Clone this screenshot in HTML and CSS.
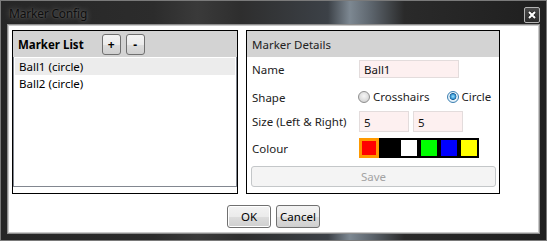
FILE: index.html
```html
<!DOCTYPE html>
<html lang="en">
<head>
  <meta charset="UTF-8" />
  <title>Marker Config</title>
  <link rel="stylesheet" href="styles.css">
</head>
<body>
  <div class="window">
    <div class="titlebar">
      <span class="title">Marker Config</span>
      <button class="close-btn" title="Close">
        <svg width="10" height="10" viewBox="0 0 10 10"><path d="M2 2 L8 8 M8 2 L2 8" stroke="#222" stroke-width="3.4"/><path d="M2 2 L8 8 M8 2 L2 8" stroke="#fff" stroke-width="2"/></svg>
      </button>
    </div>

    <div class="client">
      <div class="panels">
        <section class="panel list-panel">
          <div class="panel-head">
            <span class="head-title bold">Marker List</span>
            <button class="small-btn plus">+</button>
            <button class="small-btn">-</button>
          </div>
          <ul class="marker-list">
            <li class="selected">Ball1 (circle)</li>
            <li>Ball2 (circle)</li>
          </ul>
        </section>

        <section class="panel details-panel">
          <div class="panel-head">
            <span class="head-title">Marker Details</span>
          </div>
          <div class="details-grid">
            <label class="field-label">Name</label>
            <div class="field"><input class="text-input name-input" type="text" value="Ball1"></div>

            <label class="field-label">Shape</label>
            <div class="field radios">
              <span class="radio"><span class="radio-dot"></span>Crosshairs</span>
              <span class="radio checked"><span class="radio-dot"></span>Circle</span>
            </div>

            <label class="field-label">Size (Left &amp; Right)</label>
            <div class="field size-inputs">
              <input class="text-input size-input" type="text" value="5">
              <input class="text-input size-input" type="text" value="5">
            </div>

            <label class="field-label">Colour</label>
            <div class="field swatches">
              <span class="swatch active" style="background: #ff0000;"></span>
              <span class="swatch" style="background: #000000;"></span>
              <span class="swatch" style="background: #ffffff;"></span>
              <span class="swatch" style="background: #00ff00;"></span>
              <span class="swatch" style="background: #0000ff;"></span>
              <span class="swatch" style="background: #ffff00;"></span>
            </div>

            <button class="save-btn" disabled>Save</button>
          </div>
        </section>
      </div>

      <div class="actions">
        <button class="dlg-btn ok-btn">OK</button>
        <button class="dlg-btn">Cancel</button>
      </div>
    </div>
  </div>
</body>
</html>
```

FILE: styles.css
```css
* {
  margin: 0;
  padding: 0;
  box-sizing: border-box;
}
html, body {
  width: 547px;
  height: 241px;
  overflow: hidden;
  font-family: 'Segoe UI', 'Noto Sans', sans-serif;
  font-size: 11.5px;
  color: #000;
  background: #1b1b1b;
}
.window {
  width: 547px;
  height: 241px;
  border: 1px solid #7a7a7a;
  padding: 0 6px 6px 6px;
  display: flex;
  flex-direction: column;
  background: linear-gradient(to right,
    #262626 0%, #2c2c2c 28%, #3a3a3a 36%, #2e2e2e 44%,
    #3c4147 60%, #7d8892 64%, #5c646c 68%, #2a2a2a 74%, #1f1f1f 100%);
}
.titlebar {
  height: 23px;
  display: flex;
  align-items: flex-start;
  justify-content: space-between;
}
.title {
  margin: 5px 0 0 2px;
  color: #0d0d0d;
  line-height: 16px;
  font-size: 12px;
  letter-spacing: -0.2px;
  text-shadow: 0 0 6px rgba(255,255,255,0.35), 0 0 2px rgba(255,255,255,0.2);
}
.close-btn {
  width: 16px;
  height: 16px;
  margin-top: 6px;
  border: 1px solid #b4b4b4;
  border-radius: 2px;
  background: linear-gradient(#4a4a4a, #2a2a2a);
  display: flex;
  align-items: center;
  justify-content: center;
}
.client {
  flex: 1;
  background: #fff;
  border: 1px solid #8e8e8e;
  box-shadow: inset 0 0 0 1px #c9c9c9;
  padding: 5px 0 2px 4px;
  display: flex;
  flex-direction: column;
}
.panels {
  display: grid;
  grid-template-columns: 226px 254px;
  column-gap: 8px;
}
.panel {
  border: 1px solid #000;
  display: flex;
  flex-direction: column;
}
.panel-head {
  height: 26px;
  background: #d3d3d3;
  display: flex;
  align-items: center;
  padding: 2px 0 0 5px;
}
.head-title {
  color: #222;
  line-height: 16px;
}
.bold {
  font-weight: bold;
  color: #000;
}
.small-btn {
  width: 19px;
  height: 21px;
  margin-top: -1px;
  border: 1px solid #707070;
  border-radius: 3px;
  background: linear-gradient(#f4f4f4 0%, #ebebeb 50%, #dddddd 51%, #cfcfcf 100%);
  font-family: inherit;
  font-size: 12px;
  font-weight: bold;
  line-height: 14px;
  color: #000;
}
.small-btn.plus {
  margin-left: 18px;
  margin-right: 5px;
}
.marker-list {
  list-style: none;
  margin: 0 0 6px 0;
  height: 130px;
  border: 1px solid #828790;
  border-top: none;
  padding: 1px 1px 0 1px;
}
.marker-list li {
  height: 17px;
  line-height: 18px;
  padding-left: 4px;
}
.marker-list li.selected {
  background: #ececec;
}
.details-grid {
  display: grid;
  grid-template-columns: 108px 1fr;
  grid-template-rows: 18px 29px 25px 26px 29px;
  align-items: end;
  padding: 3px 3px 6px 4px;
}
.field-label {
  align-self: end;
  padding-left: 1px;
  color: #222;
  line-height: 16px;
}
.field-label:nth-of-type(1) { margin-bottom: 0; }
.field-label:nth-of-type(2) { margin-bottom: 1px; }
.field-label:nth-of-type(3) { margin-bottom: 2px; }
.field-label:nth-of-type(4) { margin-bottom: 1px; }
.field {
  display: flex;
  align-items: center;
}
.text-input {
  font-family: inherit;
  font-size: 11.5px;
  color: #111;
  background: #fdf0f0;
  border: 1px solid #e3dcdc;
  padding: 0 4px;
  outline: none;
}
.name-input {
  width: 100px;
  height: 18px;
}
.size-inputs {
  gap: 4px;
}
.size-input {
  width: 50px;
  height: 21px;
  padding-top: 1px;
}
.radios {
  height: 20px;
  margin-left: -1px;
}
.radio {
  display: flex;
  align-items: center;
  color: #222;
  line-height: 16px;
}
.radio + .radio {
  margin-left: 17px;
}
.radio-dot {
  width: 12px;
  height: 12px;
  border-radius: 50%;
  border: 1px solid #8f8f8f;
  background: radial-gradient(circle at 50% 40%, #f6f6f6 0%, #dcdcdc 60%, #c4c4c4 100%);
  margin-right: 3px;
}
.radio.checked .radio-dot {
  border-color: #3c7fb1;
  background: radial-gradient(circle at 50% 45%, #9fe3ff 0%, #3a9ad6 30%, #1b5f95 42%, #e9f4fb 50%, #d2e6f3 100%);
}
.swatches {
  height: 20px;
}
.swatch {
  width: 20px;
  height: 20px;
  border: 2px solid #000;
}
.swatch.active {
  border: 3px solid #ff9900;
}
.save-btn {
  grid-column: 1 / 3;
  height: 21px;
  border: 1px solid #c4c7c9;
  border-radius: 3px;
  background: #f4f4f4;
  font-family: inherit;
  font-size: 11.5px;
  color: #a3a3a3;
}
.actions {
  display: flex;
  justify-content: center;
  gap: 5px;
  margin-top: 11px;
  padding-right: 4px;
}
.dlg-btn {
  width: 44px;
  height: 23px;
  border: 1px solid #707070;
  border-radius: 3px;
  background: linear-gradient(#f3f3f3 0%, #ebebeb 50%, #dddddd 51%, #cfcfcf 100%);
  font-family: inherit;
  font-size: 11.5px;
  color: #000;
}
.ok-btn {
  box-shadow: inset 0 0 0 1px #fff;
}
```
